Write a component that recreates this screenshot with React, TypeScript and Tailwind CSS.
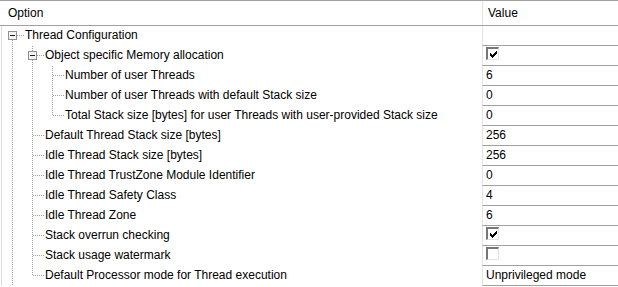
import React from 'react';

type Row = {
  label: string;
  depth: number;
  guides: boolean[];
  expandable?: boolean;
  first?: boolean;
  last?: boolean;
  value?: string;
  check?: boolean;
};

const ROWS: Row[] = [
  { label: 'Thread Configuration', depth: 0, guides: [], expandable: true, first: true },
  { label: 'Object specific Memory allocation', depth: 1, guides: [true], expandable: true, check: true },
  { label: 'Number of user Threads', depth: 2, guides: [true, true], value: '6' },
  { label: 'Number of user Threads with default Stack size', depth: 2, guides: [true, true], value: '0' },
  { label: 'Total Stack size [bytes] for user Threads with user-provided Stack size', depth: 2, guides: [true, true], last: true, value: '0' },
  { label: 'Default Thread Stack size [bytes]', depth: 1, guides: [true], value: '256' },
  { label: 'Idle Thread Stack size [bytes]', depth: 1, guides: [true], value: '256' },
  { label: 'Idle Thread TrustZone Module Identifier', depth: 1, guides: [true], value: '0' },
  { label: 'Idle Thread Safety Class', depth: 1, guides: [true], value: '4' },
  { label: 'Idle Thread Zone', depth: 1, guides: [true], value: '6' },
  { label: 'Stack overrun checking', depth: 1, guides: [true], check: true },
  { label: 'Stack usage watermark', depth: 1, guides: [true], check: false },
  { label: 'Default Processor mode for Thread execution', depth: 1, guides: [true], last: true, value: 'Unprivileged mode' },
];

const DOT = '#a0a0a0';

function Guide({ on }: { on: boolean }) {
  return (
    <svg width="20" height="20" className="shrink-0" shapeRendering="crispEdges">
      {on && <line x1="10.5" y1="0" x2="10.5" y2="20" stroke={DOT} strokeDasharray="1 1" />}
    </svg>
  );
}

function Connector({ row }: { row: Row }) {
  return (
    <svg width="23" height="20" className="shrink-0" shapeRendering="crispEdges">
      {!row.first && <line x1="10.5" y1="0" x2="10.5" y2="10" stroke={DOT} strokeDasharray="1 1" />}
      {!row.last && <line x1="10.5" y1="10" x2="10.5" y2="20" stroke={DOT} strokeDasharray="1 1" />}
      <line x1={row.expandable ? 15 : 11} y1="9.5" x2="22" y2="9.5" stroke={DOT} strokeDasharray="1 1" />
      {row.expandable && (
        <g>
          <rect x="6.5" y="5.5" width="8" height="8" fill="#f4f4f4" stroke="#8f8f8f" />
          <line x1="8" y1="9.5" x2="13" y2="9.5" stroke="#1a1a1a" />
        </g>
      )}
    </svg>
  );
}

function CheckBox({ checked }: { checked: boolean }) {
  return (
    <div className="mt-[1px] w-[13px] h-[13px] bg-white border-t-2 border-l-2 border-t-[#777777] border-l-[#777777] border-b border-r border-b-[#e3e3e3] border-r-[#e3e3e3] flex items-center justify-center">
      {checked && (
        <svg width="7" height="7" viewBox="0 0 7 7" shapeRendering="crispEdges" fill="#000">
          <rect x="6" y="0" width="1" height="3" />
          <rect x="5" y="1" width="1" height="3" />
          <rect x="4" y="2" width="1" height="3" />
          <rect x="3" y="3" width="1" height="3" />
          <rect x="2" y="4" width="1" height="3" />
          <rect x="1" y="3" width="1" height="3" />
          <rect x="0" y="2" width="1" height="3" />
        </svg>
      )}
    </div>
  );
}

export default function App() {
  return (
    <div className="w-[618px] h-[287px] overflow-hidden bg-white text-black text-[12px] leading-[19px]" style={{ fontFamily: '"Liberation Sans", Arial, sans-serif' }}>
      <div className="flex h-[26px] border-t border-b border-[#a0a0a0]">
        <div className="w-[482px] pl-[8px] flex items-center">Option</div>
        <div className="flex-1 border-l border-[#e3e3e3] pl-[5px] flex items-center">Value</div>
      </div>
      {ROWS.map((row) => (
        <div key={row.label} className="flex h-[20px]">
          <div className="w-[482px] flex h-[20px] whitespace-nowrap">
            <div className="w-[1px] shrink-0" />
            <div className="w-[1px] shrink-0 bg-[#dcdcdc]" />
            {row.guides.map((g, i) => (
              <Guide key={i} on={g} />
            ))}
            <Connector row={row} />
            <span>{row.label}</span>
          </div>
          <div className="flex-1 border-l border-[#e3e3e3] border-b border-b-[#a0a0a0] pl-[3px] flex items-start">
            {row.check !== undefined ? <CheckBox checked={row.check} /> : <span>{row.value}</span>}
          </div>
        </div>
      ))}
    </div>
  );
}
